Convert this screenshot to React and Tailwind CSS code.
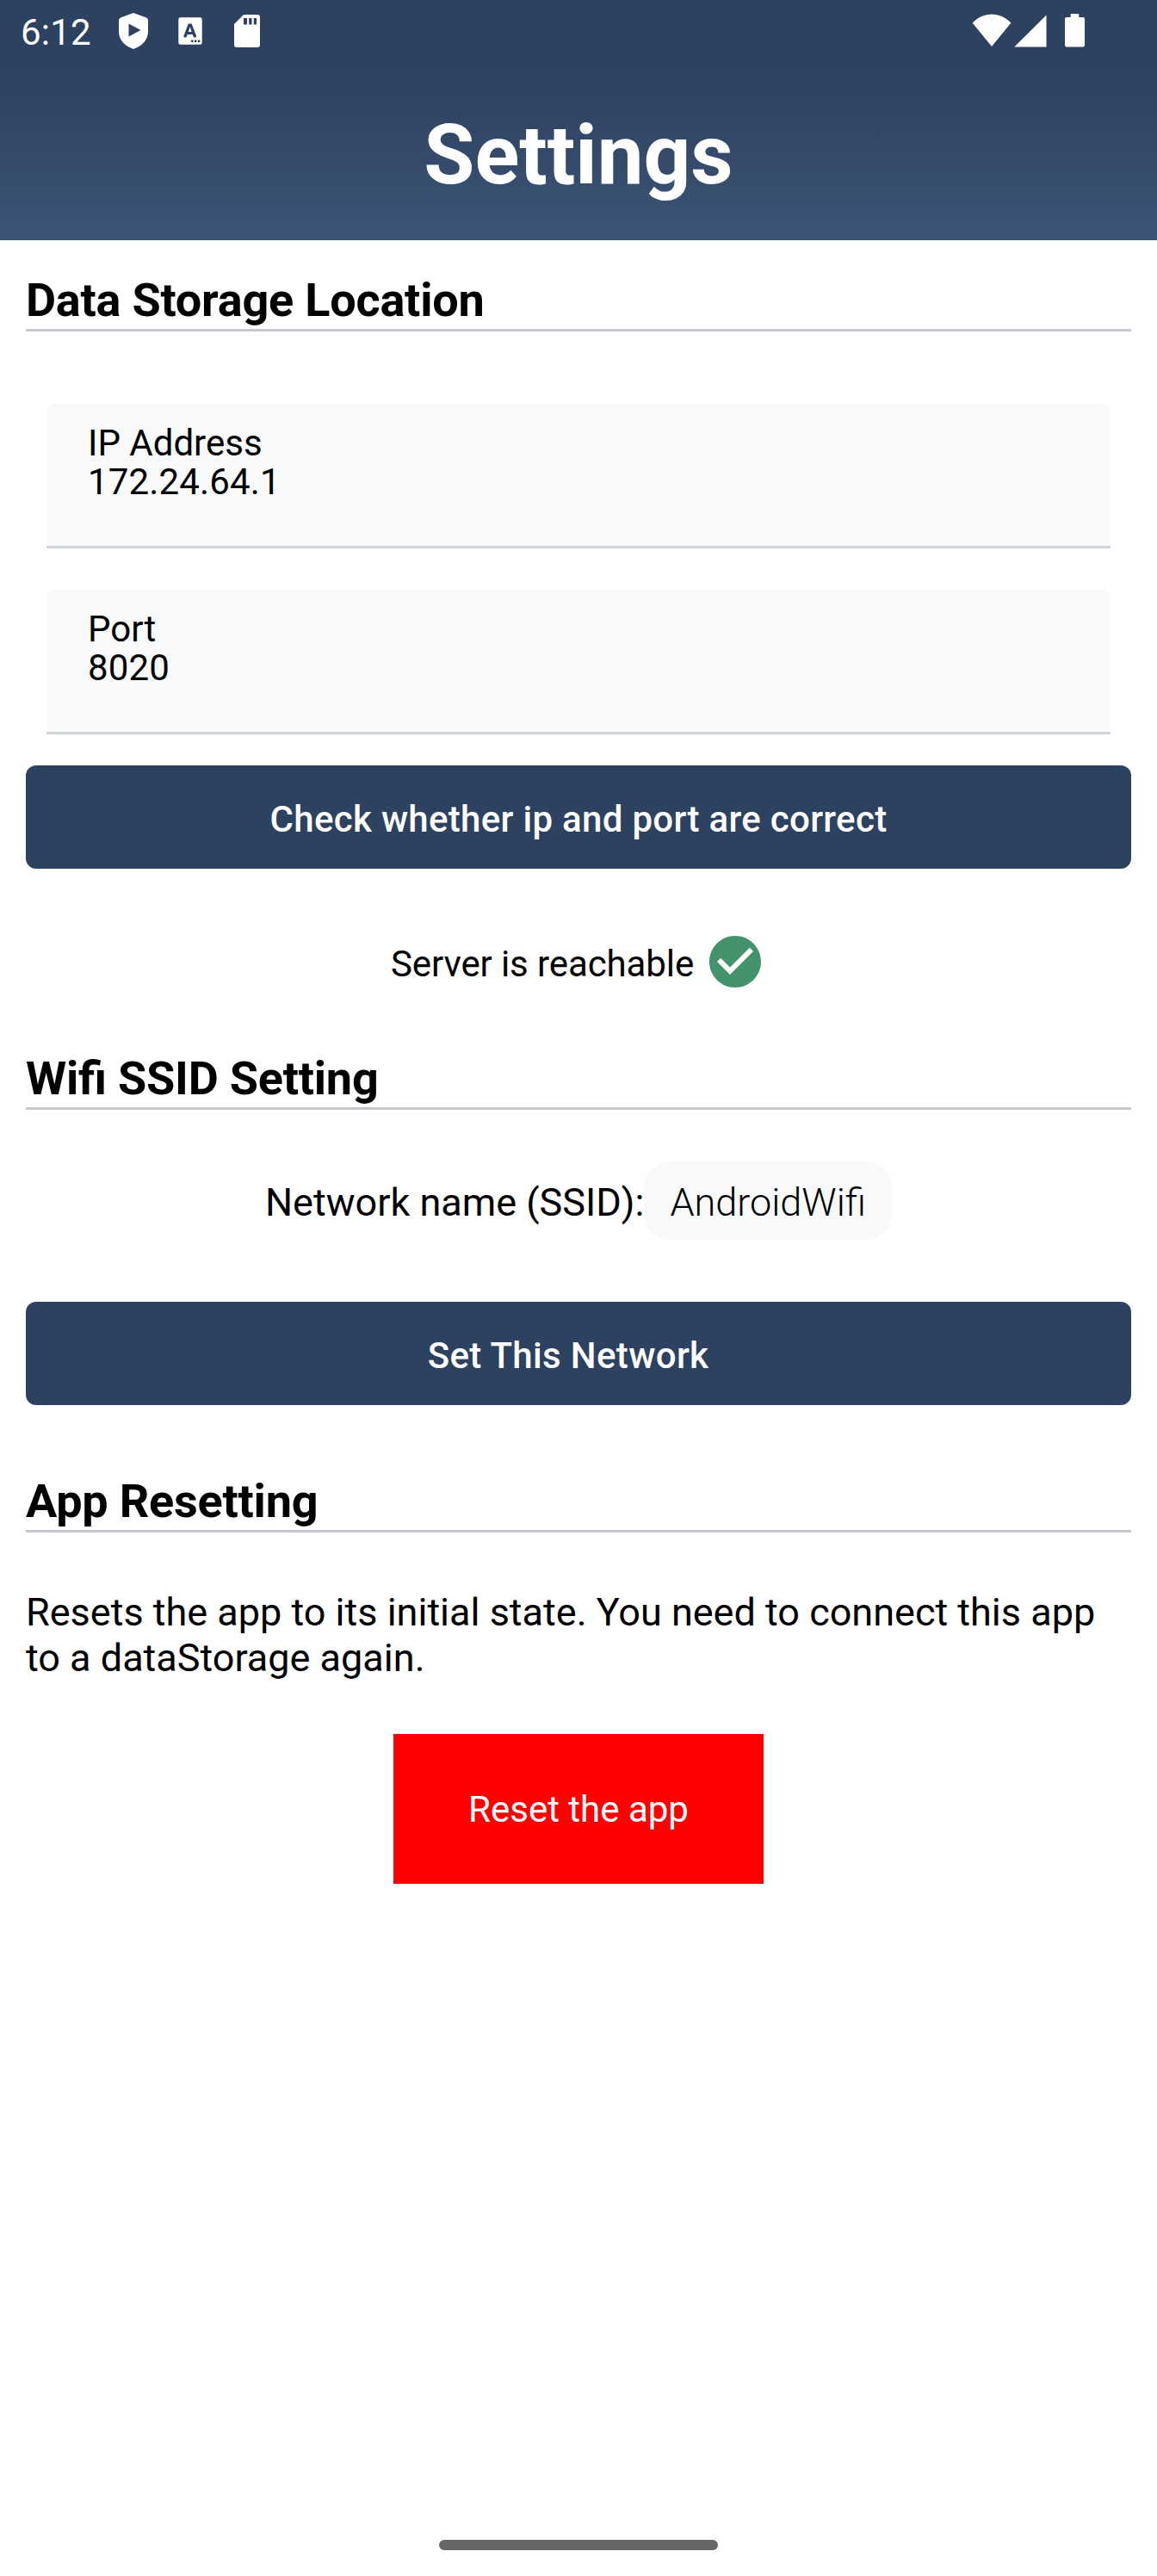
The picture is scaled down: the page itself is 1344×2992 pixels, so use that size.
function StatusBar() {
  return (
    <div className="flex h-[84px] items-start justify-between text-white">
      <div className="flex items-start">
        <span className="ml-[24px] mt-[13px] w-[112px] text-[42px] leading-[49px] tracking-[0.2px]">6:12</span>
        <svg className="ml-px mt-[14px]" width="36" height="44" viewBox="0 0 36 44" fill="currentColor">
          <path fillRule="evenodd" d="M18 1l15 5.600q2 .8 2 3v13c0 9-6 16.800-17 20.400C7 39.400 1 31.600 1 22.600v-13q0-2.200 2-3zM12.500 13.500v15L26.500 21z" />
        </svg>
        <svg className="ml-[34px] mt-[20px]" width="28" height="32" viewBox="0 0 28 32" fill="currentColor">
          <path fillRule="evenodd" d="M2.500 0.300h23a2.200 2.200 0 0 1 2.200 2.200v27a2.200 2.200 0 0 1-2.200 2.200h-23A2.200 2.200 0 0 1 .3 29.500v-27A2.200 2.200 0 0 1 2.500.3zM11.800 7.500L6.500 21.500a1.300 1.300 0 0 0 1.200 2h.9a1.300 1.300 0 0 0 1.200-.9l.9-2.600h6l.9 2.600a1.300 1.300 0 0 0 1.200.9h.9a1.300 1.300 0 0 0 1.200-2L15.600 7.500zM13.700 11.300l1.900 5.600h-3.800zM15 26.400v2.500h2.500v-2.500zM18.900 26.400v2.500h2.500v-2.500zM22.800 26.400v2.500h2.500v-2.500z" />
        </svg>
        <svg className="ml-[37px] mt-[17px]" width="30" height="38" viewBox="0 0 30 38" fill="currentColor">
          <path fillRule="evenodd" d="M11 0h16a3 3 0 0 1 3 3v32a3 3 0 0 1-3 3H3a3 3 0 0 1-3-3V11zM11 4v7.500h4V4zM17.200 4v7.500h3.300V4zM22.800 4v7.500H26V4z" />
        </svg>
      </div>
      <div className="mr-[84px] mt-4 flex items-start">
        <svg width="46" height="39" viewBox="0 0 46 39" fill="currentColor">
          <path d="M0.500 10.600Q10.500.6 23 .6t22.500 10L23 38z" />
        </svg>
        <svg className="ml-[3px] mt-px" width="38" height="38" viewBox="0 0 38 38" fill="currentColor">
          <path d="M37.500.5v37H.3z" />
        </svg>
        <svg className="ml-[21px]" width="23" height="39" viewBox="0 0 23 39" fill="currentColor">
          <path d="M6.700 0h9.600v4H21a2 2 0 0 1 2 2v30.500a2 2 0 0 1-2 2H2a2 2 0 0 1-2-2V6a2 2 0 0 1 2-2h4.700z" />
        </svg>
      </div>
    </div>
  );
}

function SectionHeading({ children }) {
  return (
    <h2 className="h-[68px] border-b-[3px] border-[#cac4d0] text-[54px] font-bold leading-[63px] tracking-[-0.22px] [font-feature-settings:'liga'_1]">
      {children}
    </h2>
  );
}

function Field({ label, value }) {
  return (
    <div className="mx-6 h-[168px] rounded-t-[12px] border-b-[3px] border-[#ced4da] bg-[#f8f9fb] pl-12 pt-[23px] text-[42px] leading-[45px]">
      <div>{label}</div>
      <div className="tracking-[0.15px]">{value}</div>
    </div>
  );
}

export default function App() {
  return (
    <div className="flex h-[2992px] w-[1344px] flex-col bg-white font-['Roboto',sans-serif] text-black">
      <header className="h-[279px] bg-[linear-gradient(to_bottom,#2d4160_0px,#2d4160_84px,#3d5476_279px)]">
        <StatusBar />
        <h1 className="pt-10 text-center text-[96px] font-bold leading-[112px] text-white">Settings</h1>
      </header>

      <main className="flex flex-1 flex-col px-[30px] pt-[38px]">
        <SectionHeading>Data Storage Location</SectionHeading>
        <div className="mt-[84px] flex flex-col gap-12">
          <Field label="IP Address" value="172.24.64.1" />
          <Field label="Port" value="8020" />
        </div>
        <button className="mt-9 flex h-[120px] justify-center rounded-[12px] bg-[#2d4160] pt-[38px] text-[42px] font-medium leading-[49px] tracking-[0.3px] text-white">
          Check whether ip and port are correct
        </button>
        <div className="mt-[72px] flex h-[72px] justify-center">
          <span className="pt-[14px] text-[42px] leading-[49px] tracking-[-0.1px]">Server is reachable</span>
          <svg className="ml-3" width="72" height="72" viewBox="0 0 24 24" fill="#42936c">
            <path d="M12 2C6.480 2 2 6.480 2 12s4.480 10 10 10 10-4.480 10-10S17.520 2 12 2zm-2 15l-5-5 1.410-1.410L10 14.170l7.590-7.590L19 8l-9 9z" />
          </svg>
        </div>

        <div className="mt-[68px]">
          <SectionHeading>Wifi SSID Setting</SectionHeading>
        </div>
        <div className="mt-[60px] flex h-[91px] justify-center text-[45px] leading-[53px]">
          <span className="pt-[21px]">Network name (SSID):</span>
          <span className="rounded-[30px] bg-[#f8f9fb] px-[30px] pt-[21px] font-light">AndroidWifi</span>
        </div>
        <button className="mt-[72px] flex h-[120px] justify-center rounded-[12px] bg-[#2d4160] pr-6 pt-[38px] text-[42px] font-medium leading-[49px] tracking-[0.35px] text-white">
          Set This Network
        </button>

        <div className="mt-20">
          <SectionHeading>App Resetting</SectionHeading>
        </div>
        <p className="mt-[66px] text-[45px] leading-[53px]">
          Resets the app to its initial state. You need to connect this app to a dataStorage again.
        </p>
        <button className="mt-[62px] flex h-[174px] w-[430px] justify-center self-center bg-[#ff0000] pt-[63px] text-[42px] leading-[49px] text-white">
          Reset the app
        </button>
      </main>

      <div className="mb-[30px] h-3 w-[324px] self-center rounded-full bg-[#666666]" />
    </div>
  );
}
